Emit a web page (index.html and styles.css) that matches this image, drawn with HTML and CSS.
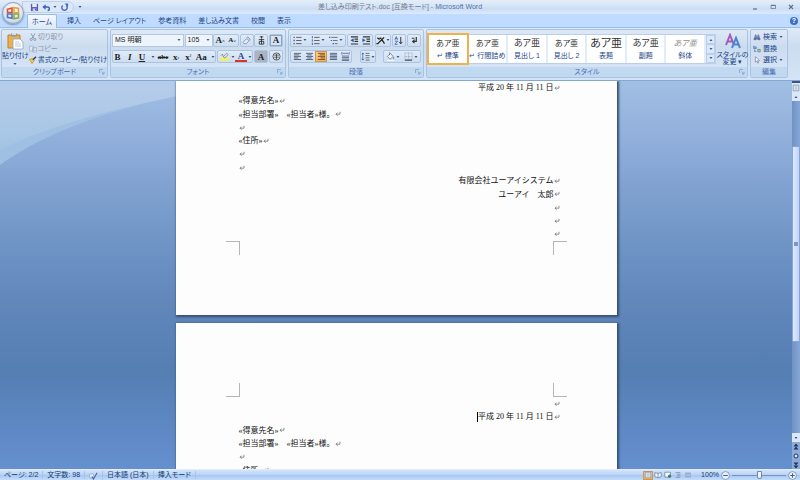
FILE: index.html
```html
<!DOCTYPE html>
<html lang="ja">
<head>
<meta charset="utf-8">
<title>差し込み印刷テスト.doc - Microsoft Word</title>
<link rel="stylesheet" href="styles.css">
</head>
<body>
<svg class="defs" aria-hidden="true">
  <symbol id="ret" viewBox="0 0 6 6"><path d="M5 .8v2.4H1M2.6 1.6L1 3.2l1.6 1.6" fill="none" stroke="#666" stroke-width=".7"/></symbol>
  <symbol id="down" viewBox="0 0 4 4"><path d="M.5 1h3L2 3z" fill="#35598f"/></symbol>
  <symbol id="launch" viewBox="0 0 6 6"><path d="M.5 4V.5H4M2.5 2.5l2.5 2.5M5 2.8V5H2.8" fill="none" stroke="#7f9fca" stroke-width=".8"/></symbol>
  <symbol id="save" viewBox="0 0 10 10"><path d="M1 1h8v8H1z" fill="#5b5bb8"/><path d="M2.5 1h5v3.5h-5z" fill="#e8f0ff"/><path d="M3 6h4v3H3z" fill="#c8cff0"/><path d="M5.5 6.5h1V8h-1z" fill="#33408a"/></symbol>
  <symbol id="undo" viewBox="0 0 10 10"><path d="M2 4.5h4.2a2 2 0 0 1 0 4" fill="none" stroke="#3a5fc0" stroke-width="1.6"/><path d="M.5 4.5L4 1.5v6z" fill="#3a5fc0"/></symbol>
  <symbol id="redo" viewBox="0 0 10 10"><path d="M3 2.8a3 3 0 1 0 4 0" fill="none" stroke="#4a67c6" stroke-width="1.6"/><path d="M5 .5h4v4z" fill="#4a67c6"/></symbol>
  <symbol id="paste" viewBox="0 0 18 18"><path d="M2 3h12v13H2z" fill="#edb04f" stroke="#bd812c"/><path d="M5 1.5h6v3H5z" fill="#8c98a8"/><path d="M6 1h4v2H6z" fill="#d8dde6"/><path d="M7 7h7l3 3v7H7z" fill="#fff" stroke="#8ba4cb" stroke-width=".8"/><path d="M9 10h4M9 12h6M9 14h6" stroke="#a9bede" stroke-width=".8"/></symbol>
  <symbol id="cut" viewBox="0 0 8 8"><path d="M2 .5l3 5M6 .5l-3 5" stroke="#8c9bb3" stroke-width="1" fill="none"/><circle cx="2.2" cy="6.4" r="1.1" fill="none" stroke="#8c9bb3"/><circle cx="5.8" cy="6.4" r="1.1" fill="none" stroke="#8c9bb3"/></symbol>
  <symbol id="copy" viewBox="0 0 8 8"><path d="M.5 1h4v5h-4zM3.5 2.5h4V7h-4z" fill="#dfe8f5" stroke="#a2b2cc" stroke-width=".8"/><path d="M4.5 4h2M4.5 5.5h2" stroke="#a2b2cc" stroke-width=".6"/></symbol>
  <symbol id="brush" viewBox="0 0 8 8"><path d="M.5 3.5l3-1.2 1.7 2.2L3 7.5z" fill="#f3c83c" stroke="#a5761a" stroke-width=".5"/><path d="M4 3.8L7 .8" stroke="#3f3f55" stroke-width="1.6"/></symbol>
  <symbol id="eraser" viewBox="0 0 10 10"><path d="M1 7l4-4 3 2-3 3.500H2z" fill="#e4e9f4" stroke="#7384a8" stroke-width=".8"/><path d="M5 2l1.500-1L9 3.500 8 5" fill="none" stroke="#5773ae" stroke-width=".8"/></symbol>
  <symbol id="ruby" viewBox="0 0 10 10"><path d="M3 1h4M5 0v3M2 4h6M5 3.500v5.500M2.500 6h5v3h-5z" fill="none" stroke="#333" stroke-width="1"/></symbol>
  <symbol id="marker" viewBox="0 0 11 10"><path d="M0 6h11v4H0z" fill="#f8f25a"/><path d="M4 5.500L8 1l2 1.500L6 7z" fill="#dfe6f2" stroke="#54698f" stroke-width=".7"/><path d="M1 4l2-2 1 3" fill="none" stroke="#54698f" stroke-width=".8"/></symbol>
  <symbol id="ring" viewBox="0 0 10 10"><circle cx="5" cy="5" r="4" fill="none" stroke="#444" stroke-width=".9"/><path d="M2.500 3.500h5M2.500 5.800h5M5 2v6.500" stroke="#444" stroke-width=".9"/></symbol>
  <symbol id="bullets" viewBox="0 0 10 10"><path d="M.5 1.500H2M.5 5H2M.5 8.500H2" stroke="#3d5f9e" stroke-width="1.400"/><path d="M3.500 1.500H9.500M3.500 5H9.500M3.500 8.500H9.500" stroke="#555"/></symbol>
  <symbol id="numbers" viewBox="0 0 10 10"><path d="M1.500 0v2.500M1.500 3.700v2.500M1.500 7.400V10" stroke="#3d5f9e" stroke-width="1"/><path d="M3.500 1.500H9.500M3.500 5H9.500M3.500 8.500H9.500" stroke="#555"/></symbol>
  <symbol id="multi" viewBox="0 0 10 10"><path d="M0 1.500h1.500M2 5h1.500M4 8.500h1.500" stroke="#3d5f9e" stroke-width="1.300"/><path d="M2.500 1.500H9.500M4.500 5H9.500M6.500 8.500H9.500" stroke="#666"/></symbol>
  <symbol id="outdent" viewBox="0 0 10 10"><path d="M1 1h8M5 3.500h4M5 6h4M1 8.800h8" stroke="#333" stroke-width="1.200"/><path d="M4 2.500v4.500L.5 4.700z" fill="#3057a4"/></symbol>
  <symbol id="indent" viewBox="0 0 10 10"><path d="M1 1h8M5 3.500h4M5 6h4M1 8.800h8" stroke="#333" stroke-width="1.200"/><path d="M.5 2.500v4.500L4 4.700z" fill="#3057a4"/></symbol>
  <symbol id="fit" viewBox="0 0 10 10"><path d="M.5 8.500h1.500L6.500 4 9.500 8.500M1.500 2l2.500 2M9 1.500L6 4.500M4 2.500h2" fill="none" stroke="#222" stroke-width="1.400"/></symbol>
  <symbol id="sort" viewBox="0 0 10 10"><path d="M1 4.200L2.500.7 4 4.200M1.500 3h2M1 5.700h3L1 9.200h3" fill="none" stroke="#3d5da0" stroke-width=".9"/><path d="M7.500 1v7M5.800 6.500l1.700 2.200 1.700-2.200" fill="none" stroke="#333" stroke-width="1.100"/></symbol>
  <symbol id="marks" viewBox="0 0 10 10"><path d="M7 1v5H3M5 4L3 6l2 2" fill="none" stroke="#333" stroke-width="1.300"/><path d="M2 2.500h3" stroke="#333"/></symbol>
  <symbol id="left" viewBox="0 0 10 10"><path d="M1 1.500h8M1 3.200h6M1 4.900h8M1 6.600h5M1 8.300h8" stroke="#4d5a70" stroke-width="1"/></symbol>
  <symbol id="center" viewBox="0 0 10 10"><path d="M1 1.500h8M2.500 3.200h5M1 4.900h8M2.500 6.600h5M1 8.300h8" stroke="#4d5a70" stroke-width="1"/></symbol>
  <symbol id="right" viewBox="0 0 10 10"><path d="M1 1.500h8M3 3.200h6M1 4.900h8M4 6.600h5M1 8.300h8" stroke="#7c4a2c" stroke-width="1"/></symbol>
  <symbol id="justify" viewBox="0 0 10 10"><path d="M1 1.500h8M1 3.200h8M1 4.900h8M1 6.600h8M1 8.300h8" stroke="#4d5a70" stroke-width="1"/></symbol>
  <symbol id="spread" viewBox="0 0 10 10"><path d="M1 0v3M9 0v3M2 1.500h6" stroke="#3d5f9e" stroke-width=".9"/><path d="M1 4.500h8M1 6.200h8M1 8h8M1 9.500h8" stroke="#4d5a70" stroke-width=".9"/></symbol>
  <symbol id="spacing" viewBox="0 0 10 10"><path d="M2 1v8M.7 2.500L2 1l1.300 1.500M.7 7.500L2 9l1.300-1.500" fill="none" stroke="#3d5fae" stroke-width=".9"/><path d="M5 1.500h4.500M5 4h4.500M5 6.500h4.500M5 9h4.500" stroke="#555" stroke-width=".9"/></symbol>
  <symbol id="bucket" viewBox="0 0 10 10"><path d="M1.500 5L5 1.500 8 5 4.500 8z" fill="#eef2f9" stroke="#65718a" stroke-width=".8"/><path d="M4 .5v3M8.500 5.500v2.500" stroke="#65718a" stroke-width=".9"/><path d="M1 9.500h8" stroke="#fff"/></symbol>
  <symbol id="border" viewBox="0 0 10 10"><path d="M1 1h8v8M1 1v8M5 1v8M1 5h8" fill="none" stroke="#8e9cb5" stroke-width=".7" stroke-dasharray="1 .6"/><path d="M1 9h8" stroke="#333" stroke-width="1.200"/></symbol>
  <symbol id="find" viewBox="0 0 10 10"><path d="M1 8l1.500-6h1.500L5 5l1-3h1.500L9 8z" fill="#6d83b3"/><circle cx="2.500" cy="7.500" r="1.700" fill="#3e5488"/><circle cx="7.500" cy="7.500" r="1.700" fill="#3e5488"/><circle cx="2.500" cy="7.500" r=".7" fill="#c9dcff"/><circle cx="7.500" cy="7.500" r=".7" fill="#c9dcff"/></symbol>
  <symbol id="replace" viewBox="0 0 10 10"><path d="M1 1v3.500h3V2.500H1M2 6v2h2" fill="none" stroke="#3f619f" stroke-width=".9"/><path d="M6 5.500h3v3H6z" fill="#bcd6b8" stroke="#3a7b54" stroke-width=".8"/></symbol>
  <symbol id="select" viewBox="0 0 10 10"><path d="M3 .8v7l1.700-1.600L6 9l1-.5-1.200-2.700H8z" fill="#fff" stroke="#576985" stroke-width=".7"/></symbol>
  <symbol id="check" viewBox="0 0 10 10"><path d="M.5 4l4-1 1 4-4 1z" fill="#fff" stroke="#7b93bb" stroke-width=".7"/><path d="M3 6l2 3 4-7" fill="none" stroke="#4768a8" stroke-width="1.200"/></symbol>
  <symbol id="view" viewBox="0 0 10 10"><path d="M1.500 1.500h7v7h-7z" fill="#f5f8fd" stroke="#6f86a8" stroke-width=".9"/><path d="M3 3.500h4M3 5h4M3 6.500h4" stroke="#7c91b1" stroke-width=".7"/></symbol>
  <symbol id="book" viewBox="0 0 10 10"><path d="M1 2l4 1 4-1v5L5 8.500 1 7z" fill="#f5f8fd" stroke="#62799d" stroke-width=".9"/><path d="M5 3v5" stroke="#62799d"/></symbol>
  <symbol id="web" viewBox="0 0 10 10"><path d="M1 1.500h7v6H1z" fill="#f5f8fd" stroke="#62799d" stroke-width=".9"/><circle cx="7" cy="6.500" r="2" fill="#39805b"/></symbol>
  <symbol id="outline" viewBox="0 0 10 10"><path d="M2 2h6M4 4h4M4 6h4M2 8h6" stroke="#7890b5"/></symbol>
  <symbol id="draft" viewBox="0 0 10 10"><path d="M1.500 2h7v6h-7z" fill="#8ca4c7"/><path d="M2 4h6M2 6h6" stroke="#d5e3f8" stroke-width=".7"/></symbol>
</svg>

<header class="top">
  <button class="office" aria-label="Office">
    <svg viewBox="0 0 14 14"><g fill="none" stroke-width="1.600"><path d="M1.500 3.200l4.500-1.200v4.500H1.500z" stroke="#d9532c"/><path d="M8 1.500l4.500 1v4.300H8z" stroke="#e9a137"/><path d="M1.500 8h4.500v4.200l-4.500-.8z" stroke="#4c78c9"/><path d="M8 8h4.500v3.800L8 12.800z" stroke="#8aa844"/></g></svg>
  </button>
  <div class="titlebar">
    <div class="quick">
      <button aria-label="上書き保存"><svg class="i9"><use href="#save"/></svg></button>
      <button aria-label="元に戻す"><svg class="i9"><use href="#undo"/></svg><svg class="dd"><use href="#down"/></svg></button>
      <button aria-label="やり直し"><svg class="i9"><use href="#redo"/></svg></button>
    </div>
    <svg class="dd more"><use href="#down"/></svg>
    <h1>差し込み印刷テスト.doc [互換モード] - <b>Microsoft Word</b></h1>
    <div class="window">
      <button aria-label="最小化"><svg viewBox="0 0 6 6"><path d="M1 5h4" stroke="#5c6f8c" stroke-width="1.200"/></svg></button>
      <button aria-label="元のサイズ"><svg viewBox="0 0 6 6"><path d="M1 1.500h4.500v3H1z" fill="none" stroke="#5c6f8c" stroke-width=".7"/><path d="M1 1.300h4.500" stroke="#5c6f8c"/></svg></button>
      <button aria-label="閉じる"><svg viewBox="0 0 6 6"><path d="M1 1l4 4M5 1L1 5" stroke="#5c6f8c" stroke-width="1.100"/></svg></button>
    </div>
  </div>
  <nav class="tabs">
    <button class="on">ホーム</button><button>挿入</button><button>ページ レイアウト</button><button>参考資料</button><button>差し込み文書</button><button>校閲</button><button>表示</button>
    <button class="help" aria-label="ヘルプ">?</button>
  </nav>
</header>

<section class="ribbon">
  <div class="group clip">
    <div class="body">
      <button class="big"><svg class="i18"><use href="#paste"/></svg><span>貼り付け</span><svg class="dd"><use href="#down"/></svg></button>
      <div class="list">
        <button class="off"><svg class="i8"><use href="#cut"/></svg>切り取り</button>
        <button class="off"><svg class="i8"><use href="#copy"/></svg>コピー</button>
        <button><svg class="i8"><use href="#brush"/></svg>書式のコピー/貼り付け</button>
      </div>
    </div>
    <footer>クリップボード<svg><use href="#launch"/></svg></footer>
  </div>

  <div class="group font">
    <div class="body rows">
      <div class="row">
        <label class="combo name"><select aria-label="フォント"><option>MS 明朝</option></select><svg class="dd"><use href="#down"/></svg></label>
        <label class="combo size"><select aria-label="フォント サイズ"><option>105</option></select><svg class="dd"><use href="#down"/></svg></label>
        <div class="set"><button class="serif">A<sup>˄</sup></button><button class="serif small">A<sup>˅</sup></button></div>
        <div class="set"><button aria-label="書式のクリア"><svg class="i9"><use href="#eraser"/></svg></button></div>
        <div class="set"><button aria-label="ルビ"><svg class="i9"><use href="#ruby"/></svg></button></div>
        <div class="set"><button class="serif boxed">A</button></div>
      </div>
      <div class="row">
        <div class="set wide">
          <button class="serif">B</button><button class="serif it">I</button><button class="serif"><u>U</u></button><svg class="dd"><use href="#down"/></svg>
          <button class="serif"><s>abc</s></button><button class="serif">x<sub>₂</sub></button><button class="serif">x<sup>²</sup></button><button class="serif">Aa</button><svg class="dd"><use href="#down"/></svg>
        </div>
        <div class="set colors">
          <button aria-label="蛍光ペン"><svg class="i9"><use href="#marker"/></svg></button><svg class="dd"><use href="#down"/></svg>
          <button class="serif red">A</button><svg class="dd"><use href="#down"/></svg>
        </div>
        <div class="set"><button class="serif shade">A</button></div>
        <div class="set"><button aria-label="囲い文字"><svg class="i9"><use href="#ring"/></svg></button></div>
      </div>
    </div>
    <footer>フォント<svg><use href="#launch"/></svg></footer>
  </div>

  <div class="group para">
    <div class="body rows">
      <div class="row">
        <div class="set lists">
          <button aria-label="箇条書き"><svg class="i9"><use href="#bullets"/></svg><svg class="dd"><use href="#down"/></svg></button>
          <button aria-label="段落番号"><svg class="i9"><use href="#numbers"/></svg><svg class="dd"><use href="#down"/></svg></button>
          <button aria-label="アウトライン"><svg class="i9"><use href="#multi"/></svg><svg class="dd"><use href="#down"/></svg></button>
        </div>
        <div class="set"><button aria-label="インデントを減らす"><svg class="i9"><use href="#outdent"/></svg></button><button aria-label="インデントを増やす"><svg class="i9"><use href="#indent"/></svg></button></div>
        <div class="set"><button aria-label="拡張書式"><svg class="i9"><use href="#fit"/></svg><svg class="dd"><use href="#down"/></svg></button></div>
        <div class="set"><button aria-label="並べ替え"><svg class="i9"><use href="#sort"/></svg></button></div>
        <div class="set"><button aria-label="編集記号"><svg class="i9"><use href="#marks"/></svg></button></div>
      </div>
      <div class="row">
        <div class="set">
          <button aria-label="左揃え"><svg class="i9"><use href="#left"/></svg></button>
          <button aria-label="中央揃え"><svg class="i9"><use href="#center"/></svg></button>
          <button class="sel" aria-label="右揃え"><svg class="i9"><use href="#right"/></svg></button>
          <button aria-label="両端揃え"><svg class="i9"><use href="#justify"/></svg></button>
          <button aria-label="均等割り付け"><svg class="i9"><use href="#spread"/></svg></button>
        </div>
        <div class="set"><button aria-label="行間"><svg class="i9"><use href="#spacing"/></svg><svg class="dd"><use href="#down"/></svg></button></div>
        <div class="set lists"><button aria-label="塗りつぶし"><svg class="i9"><use href="#bucket"/></svg><svg class="dd"><use href="#down"/></svg></button><button aria-label="罫線"><svg class="i9"><use href="#border"/></svg><svg class="dd"><use href="#down"/></svg></button></div>
      </div>
    </div>
    <footer>段落<svg><use href="#launch"/></svg></footer>
  </div>

  <div class="group styles">
    <div class="body">
      <div class="gallery">
        <button class="on"><i>あア亜</i><span>↵ 標準</span></button>
        <button><i>あア亜</i><span>↵ 行間詰め</span></button>
        <button><i class="head">あア亜</i><span>見出し 1</span></button>
        <button><i>あア亜</i><span>見出し 2</span></button>
        <button><i class="title">あア亜</i><span>表題</span></button>
        <button><i class="head">あア亜</i><span>副題</span></button>
        <button><i class="slant">あア亜</i><span>斜体</span></button>
        <div class="pager"><button aria-label="上へ"><svg class="dd flip"><use href="#down"/></svg></button><button aria-label="下へ"><svg class="dd"><use href="#down"/></svg></button><button aria-label="その他"><svg class="dd"><use href="#down"/></svg></button></div>
      </div>
      <button class="big change"><svg viewBox="0 0 18 16"><path d="M2 12L6 2l4 10M3.500 8.500h5" fill="none" stroke="#a65bb8" stroke-width="2"/><path d="M8 15l4-10 4 10M9.500 11.500h5" fill="none" stroke="#4d83d0" stroke-width="2"/></svg><span>スタイルの<br>変更 ▾</span></button>
    </div>
    <footer>スタイル<svg><use href="#launch"/></svg></footer>
  </div>

  <div class="group edit">
    <div class="body"><div class="list">
      <button><svg class="i8"><use href="#find"/></svg>検索<svg class="dd"><use href="#down"/></svg></button>
      <button><svg class="i8"><use href="#replace"/></svg>置換</button>
      <button><svg class="i8"><use href="#select"/></svg>選択<svg class="dd"><use href="#down"/></svg></button>
    </div></div>
    <footer>編集</footer>
  </div>
</section>

<main class="desk">
  <svg class="swoosh" viewBox="0 0 800 100" preserveAspectRatio="none" aria-hidden="true">
    <defs><linearGradient id="sky" x1="0" y1="0" x2="0" y2="1"><stop offset="0" stop-color="#b6cdea"/><stop offset="1" stop-color="#a4c4e4"/></linearGradient></defs>
    <path d="M0 0H260Q80 26 0 84z" fill="#9fbfe3"/>
    <path d="M0 0H260Q75 30 0 69z" fill="url(#sky)"/>
  </svg>
  <div class="sheets">
    <article class="sheet first">
      <div class="text">
        <p class="r">平成 20 年 11 月 11 日<svg><use href="#ret"/></svg></p>
        <p>«得意先名»<svg><use href="#ret"/></svg></p>
        <p>«担当部署»　«担当者»様。<svg><use href="#ret"/></svg></p>
        <p><svg><use href="#ret"/></svg></p>
        <p>«住所»<svg><use href="#ret"/></svg></p>
        <p><svg><use href="#ret"/></svg></p>
        <p><svg><use href="#ret"/></svg></p>
        <p class="r">有限会社ユーアイシステム<svg><use href="#ret"/></svg></p>
        <p class="r">ユーアイ　太郎<svg><use href="#ret"/></svg></p>
        <p class="r"><svg><use href="#ret"/></svg></p>
        <p class="r"><svg><use href="#ret"/></svg></p>
        <p class="r"><svg><use href="#ret"/></svg></p>
      </div>
      <div class="crops bottom"><span></span><span></span></div>
    </article>
    <article class="sheet second">
      <div class="crops head"><span></span><span></span></div>
      <div class="text">
        <p class="r"><svg><use href="#ret"/></svg></p>
        <p class="r"><span class="caret"></span>平成 20 年 11 月 11 日<svg><use href="#ret"/></svg></p>
        <p>«得意先名»<svg><use href="#ret"/></svg></p>
        <p>«担当部署»　«担当者»様。<svg><use href="#ret"/></svg></p>
        <p><svg><use href="#ret"/></svg></p>
        <p>«住所»<svg><use href="#ret"/></svg></p>
      </div>
    </article>
  </div>
  <div class="scroll">
    <span class="split"></span>
    <button aria-label="ルーラー"><svg class="i8"><use href="#view"/></svg></button>
    <button aria-label="上へスクロール"><svg class="dd flip"><use href="#down"/></svg></button>
    <div class="track"><div class="thumb"></div></div>
    <button aria-label="下へスクロール"><svg class="dd"><use href="#down"/></svg></button>
    <button class="nav" aria-label="前のページ"><svg viewBox="0 0 8 8"><path d="M4 .5l2.500 3h-5zM4 3.500l2.500 3h-5z" fill="#1c355f"/></svg></button>
    <button class="nav" aria-label="ジャンプ"><svg viewBox="0 0 8 8"><circle cx="4" cy="4" r="2" fill="#d5e3f6" stroke="#1c355f"/></svg></button>
    <button class="nav" aria-label="次のページ"><svg viewBox="0 0 8 8"><path d="M4 4.500l2.500-3h-5zM4 7.500l2.500-3h-5z" fill="#1c355f"/></svg></button>
  </div>
</main>

<footer class="status">
  <span>ページ: 2/2</span><span>文字数: 98</span><span><svg class="i9"><use href="#check"/></svg></span><span>日本語 (日本)</span><span>挿入モード</span>
  <div class="views">
    <button class="sel" aria-label="印刷レイアウト"><svg class="i8"><use href="#view"/></svg></button>
    <button aria-label="全画面閲覧"><svg class="i8"><use href="#book"/></svg></button>
    <button aria-label="Web レイアウト"><svg class="i8"><use href="#web"/></svg></button>
    <button aria-label="アウトライン"><svg class="i8"><use href="#outline"/></svg></button>
    <button aria-label="下書き"><svg class="i8"><use href="#draft"/></svg></button>
  </div>
  <div class="zoom">
    <label for="zoom">100%</label>
    <button aria-label="縮小"><svg viewBox="0 0 8 8"><circle cx="4" cy="4" r="3.500" fill="#edf4fe" stroke="#6d88b3" stroke-width=".7"/><path d="M2 4h4" stroke="#47608c"/></svg></button>
    <input id="zoom" type="range" min="0" max="100" value="50">
    <button aria-label="拡大"><svg viewBox="0 0 8 8"><circle cx="4" cy="4" r="3.500" fill="#edf4fe" stroke="#6d88b3" stroke-width=".7"/><path d="M2 4h4M4 2v4" stroke="#47608c"/></svg></button>
  </div>
</footer>
</body>
</html>
```

FILE: styles.css
```css
* { box-sizing: border-box; margin: 0; padding: 0; }

body {
  display: flex;
  flex-direction: column;
  height: 100vh;
  overflow: hidden;
  background: #bfd9fb;
  color: #1c4587;
  font: 7px/8px "Liberation Sans", "Noto Sans CJK JP", sans-serif;
  font-feature-settings: "palt";
  white-space: nowrap;
}

button, select, input {
  border: 0;
  background: none;
  color: inherit;
  font: inherit;
  font-feature-settings: inherit;
  appearance: none;
}

button { display: flex; align-items: center; justify-content: center; white-space: nowrap; }
svg { display: block; flex: none; }
.defs { position: absolute; width: 0; height: 0; }
.i8 { width: 8px; height: 8px; }
.i9 { width: 9px; height: 9px; }
.i18 { width: 18px; height: 18px; }
.dd { width: 4px; height: 4px; }
.flip { transform: rotate(180deg); }

/* title bar and tabs */
.top { position: relative; flex: none; }

.office {
  position: absolute;
  left: 2px;
  top: 2px;
  width: 22px;
  height: 22px;
  border: 1px solid #8ea2c4;
  border-radius: 50%;
  background: radial-gradient(circle at 50% 35%, #fff, #e1e6f0 55%, #b6c4dc);
  box-shadow: 0 1px 2px #6f8db9;
}
.office svg { width: 14px; height: 14px; }

.titlebar {
  display: flex;
  align-items: center;
  height: 14px;
  padding: 0 6px 0 22px;
  background: linear-gradient(#e5eefa, #d5e4f7 45%, #cbddf5 60%, #dceaff);
}
.quick {
  display: flex;
  align-items: center;
  gap: 3px;
  width: 52px;
  height: 12px;
  padding-left: 7px;
  border: 1px solid #c0d1e9;
  border-radius: 0 6px 6px 0;
  background: #dce8f8;
}
.quick button { gap: 2px; }
.more { margin-left: 4px; }
h1 { flex: 1; padding-right: 34px; color: #727b8c; font-size: 7px; font-weight: 400; text-align: center; }
h1 b { color: #5272aa; font-weight: 400; }
.window { display: flex; gap: 12px; }
.window svg { width: 6px; height: 6px; }

.tabs {
  display: flex;
  height: 14px;
  padding-left: 27px;
  border-bottom: 1px solid #9bbce6;
  background: #bfdbff;
}
.tabs button { padding: 0 6px; }
.tabs .on {
  width: 30px;
  height: 14px;
  margin-right: 4px;
  padding: 0;
  border: 1px solid #9bbce6;
  border-bottom: 0;
  border-radius: 2px 2px 0 0;
  background: linear-gradient(#f4f9ff, #dfe9f6);
}
.tabs .help {
  align-self: center;
  width: 8px;
  height: 8px;
  margin: 0 2px 0 auto;
  padding: 0;
  border-radius: 50%;
  background: #3b6fc1;
  color: #fff;
  font-weight: 700;
}

/* ribbon */
.ribbon {
  display: flex;
  gap: 2px;
  flex: none;
  height: 53px;
  padding: 1px 12px 2px 1px;
  border-bottom: 1px solid #84a7d5;
  background: linear-gradient(#dfeaf7, #cbdcf0 35%, #d3e4f6);
}
.group {
  display: flex;
  flex-direction: column;
  border: 1px solid #a9c3e4;
  border-radius: 2px;
  background: linear-gradient(#dee9f6, #ccdcef 35%, #d8e7f8);
}
.clip { width: 107px; }
.font { width: 176px; }
.para { width: 136px; }
.styles { flex: 1; }
.edit { width: 38px; }
.group .body { display: flex; flex: 1; min-height: 0; }
.group footer {
  position: relative;
  height: 10px;
  background: #c1d8f1;
  color: #4a6fad;
  line-height: 10px;
  text-align: center;
}
.group footer svg { position: absolute; right: 2px; top: 2px; width: 6px; height: 6px; }

.big { flex-direction: column; justify-content: flex-start; gap: 2px; width: 28px; padding-top: 2px; }
.list { display: flex; flex: 1; flex-direction: column; justify-content: space-evenly; }
.list button { justify-content: flex-start; gap: 1px; }
.edit .list { padding-left: 2px; }
.edit .list button { gap: 2px; }
.off { color: #8c98ab; }

.rows { flex-direction: column; justify-content: space-evenly; }
.row { display: flex; justify-content: space-between; height: 13px; padding: 0 2px 0 1px; }
.combo {
  display: flex;
  align-items: center;
  padding: 0 2px;
  border: 1px solid #b3c7e1;
  background: #eef4fc;
  color: #222;
}
.combo select { flex: 1; min-width: 0; }
.name { width: 72px; }
.size { width: 28px; }
.set {
  display: flex;
  align-items: center;
  border: 1px solid #adc3e0;
  border-radius: 2px;
  background: linear-gradient(#e0ebf8, #cddef2);
}
.set button { min-width: 12px; height: 11px; }
.set .dd { margin-left: 1px; }
.lists button { min-width: 18px; }
.set.wide { justify-content: space-between; width: 104px; }
.wide button { min-width: 9px; }
.serif { color: #222; font: 700 9px/10px "Liberation Serif", serif; }
.serif sup, .serif sub { font-size: 5px; line-height: 5px; }
.serif s { font-size: 7px; }
.small { font-size: 7px; }
.it { font-style: italic; }
.boxed { border: 1px solid #8fa5c5; background: #d6e3f4; }
.shade { background: #aab4c4; }
.red { border-bottom: 2px solid #d9332b; color: #2b4b8b; line-height: 8px; }
.sel { background: linear-gradient(#fbd08b, #f8b04c); box-shadow: inset 0 0 0 1px #c59a5a; }

.gallery {
  display: flex;
  flex: 1;
  margin: 4px 2px 3px 1px;
  border: 1px solid #b9cfec;
  background: #e1ecf9;
}
.gallery > button {
  flex: 1;
  flex-direction: column;
  gap: 3px;
  margin-right: 2px;
  background: #fff;
}
.gallery i { color: #333; font-size: 8px; font-style: normal; line-height: 11px; }
.gallery i.head { font-size: 9px; }
.gallery i.title { font-size: 11px; }
.gallery i.slant { color: #8d8d8d; font-style: italic; }
.gallery .on { box-shadow: 0 0 0 2px #eeb14d; }
.pager { display: flex; flex-direction: column; width: 9px; }
.pager button { flex: 1; border: 1px solid #b9cfec; background: #dce8f7; }
.change { width: 29px; padding-top: 3px; }
.change svg:first-child { width: 18px; height: 16px; }
.change span { line-height: 7px; }

/* document area */
.desk {
  position: relative;
  display: flex;
  flex: 1;
  min-height: 0;
  background: linear-gradient(#a1bee3, #95b2dd 12%, #7fa1d0 28%, #6b92c3 45%, #6187bb 57%, #557eb3 75%, #6590cf);
}
.swoosh { position: absolute; top: 0; left: 0; width: 100%; height: 100px; }
.sheets {
  position: relative;
  display: flex;
  flex: 1;
  flex-direction: column;
  align-items: center;
  gap: 8px;
  overflow: hidden;
}
.sheet {
  flex: none;
  width: 441px;
  padding: 0 63px;
  background: #fdfdfd;
  box-shadow: 1px 1px 2px 1px #364f75;
}
.first { height: 234px; }
.second { height: 234px; padding-top: 60px; }
.text {
  display: grid;
  grid-auto-rows: 1fr;
  height: 160px;
  color: #111;
  font: 8px/13px "Liberation Serif", "Noto Sans CJK JP", serif;
  font-feature-settings: normal;
}
.second .text { height: 80px; }
.text p { display: flex; align-items: center; }
.text svg { width: 6px; height: 6px; }
.text .r { justify-content: flex-end; margin-right: -6px; }
.caret { width: 1px; height: 10px; background: #000; }
.crops { display: flex; justify-content: space-between; margin: 0 -13px; }
.crops span { width: 14px; height: 14px; border: 0 solid #b5b5b5; }
.bottom span { border-top-width: 1px; }
.head span { border-bottom-width: 1px; }
.crops span:first-child { border-right-width: 1px; }
.crops span:last-child { border-left-width: 1px; }

.scroll {
  position: relative;
  display: flex;
  flex-direction: column;
  width: 8px;
  background: #8dabd6;
}
.scroll button { height: 9px; background: #dbe8f9; }
.split { height: 2px; background: #3c5680; }
.track {
  flex: 1;
  padding: 45px 0 91px;
  background: linear-gradient(90deg, #6f92c3, #86a7d6);
}
.thumb {
  height: 100%;
  border: 1px solid #87a5d5;
  border-radius: 1px;
  background: linear-gradient(#7d97be, #7d97be) center / 4px 4px no-repeat, linear-gradient(90deg, #dfeaff, #bfd2f5);
}
.scroll .nav { background: #8dabd6; }
.nav svg { width: 8px; height: 8px; }

/* status bar */
.status {
  display: flex;
  align-items: center;
  flex: none;
  height: 11px;
  border-top: 1px solid #e1ecfb;
  background: linear-gradient(#d5e5fb, #b7d2f6 50%, #a8c8f2 55%, #c5dcfa);
  color: #183a70;
}
.status > span { padding: 0 4px; border-right: 1px solid #a6c3ea; }
.views { display: flex; margin-left: auto; }
.views button { width: 10px; height: 9px; }
.zoom { display: flex; align-items: center; gap: 2px; margin: 0 3px 0 8px; }
.zoom button { width: 9px; height: 9px; }
.zoom button svg { width: 9px; height: 9px; }
.zoom input { width: 54px; height: 8px; background: linear-gradient(#7693bd, #7693bd) center / 100% 1px no-repeat; }
.zoom input::-webkit-slider-thumb { appearance: none; width: 5px; height: 8px; border: 1px solid #6d88b3; border-radius: 1px 1px 3px 3px; background: #eff5ff; }
```
